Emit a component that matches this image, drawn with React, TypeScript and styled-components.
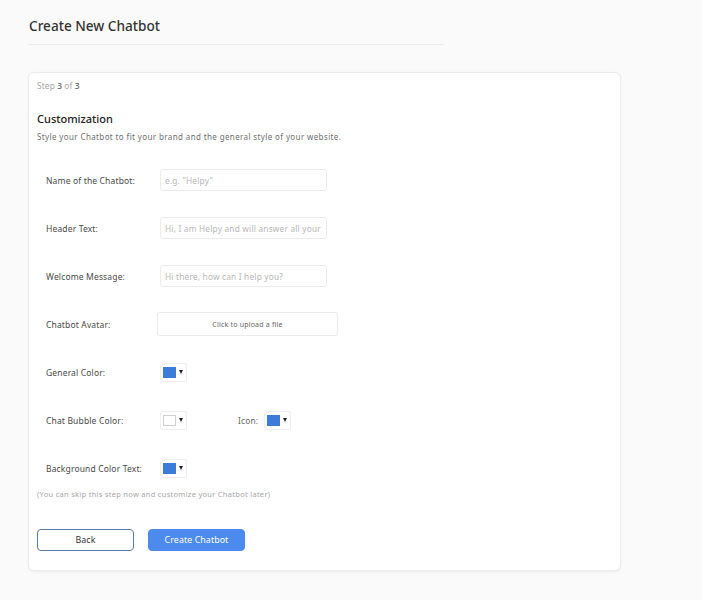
import React from "react";
import styled, { createGlobalStyle } from "styled-components";

const GlobalStyle = createGlobalStyle`
	html, body {
		margin: 0;
		padding: 0;
		background: #fafafa;
		font-family: "Noto Sans", "Open Sans", sans-serif;
		color: #333;
	}
`;

const Page = styled.div`
	padding: 0 81px 28px 28px;
`;

const Header = styled.div`
	width: 415px;
	padding: 16px 0 8px 1px;
	border-bottom: 1px solid #ececec;
`;

const Title = styled.h1`
	margin: 0;
	font-size: 13.6px;
	line-height: 20px;
	font-weight: 500;
	color: #333;
`;

const Card = styled.div`
	margin-top: 27px;
	width: 593px;
	box-sizing: border-box;
	background: #fff;
	border: 1px solid #ececec;
	border-radius: 6px;
	box-shadow: 0 1px 3px rgba(0, 0, 0, 0.06);
	padding: 7px 9px 19px 8px;
`;

const Step = styled.div`
	font-size: 8.4px;
	line-height: 12px;
	color: #a8a8a8;
	letter-spacing: 0.1px;

	& b {
		color: #777;
		font-weight: 600;
	}
`;

const SectionTitle = styled.h2`
	margin: 19px 0 0;
	font-size: 11px;
	line-height: 16px;
	font-weight: 500;
	color: #222;
`;

const SectionText = styled.p`
	margin: 4px 0 0;
	font-size: 8px;
	line-height: 12px;
	letter-spacing: 0.38px;
	color: #707070;
`;

const Form = styled.div`
	display: flex;
	flex-direction: column;
	gap: 24px;
	margin-top: 25px;
	padding-left: 9px;
`;

const Row = styled.div`
	display: flex;
	align-items: center;
	height: 24px;
`;

const Label = styled.label<{ $width?: number }>`
	width: ${(p) => p.$width ?? 114}px;
	flex: none;
	font-size: 8.5px;
	letter-spacing: 0.15px;
	color: #4a4a4a;
`;

const TextInput = styled.input`
	width: 167px;
	height: 22px;
	box-sizing: border-box;
	border: 1px solid #ececec;
	border-radius: 3px;
	padding: 0 4px;
	font-family: inherit;
	font-size: 8.3px;
	letter-spacing: 0.2px;
	color: #333;
	background: #fff;
	outline: none;

	&::placeholder {
		color: #b8b8b8;
	}
`;

const Upload = styled.div`
	width: 181px;
	height: 24px;
	margin-left: -3px;
	box-sizing: border-box;
	border: 1px solid #ececec;
	border-radius: 3px;
	display: flex;
	align-items: center;
	justify-content: center;
	font-size: 7px;
	letter-spacing: 0.2px;
	color: #666;
	cursor: pointer;
`;

const Picker = styled.div`
	width: 27px;
	height: 19px;
	box-sizing: border-box;
	border: 1px solid #eeeeee;
	border-radius: 2px;
	display: flex;
	align-items: center;
	gap: 3px;
	padding-left: 2px;
	background: #fff;
`;

const Swatch = styled.span<{ $color: string }>`
	width: 13px;
	height: 11px;
	box-sizing: border-box;
	background: ${(p) => p.$color};
	border: ${(p) => (p.$color === "#ffffff" ? "1px solid #cfcfcf" : "none")};
`;

const Caret = styled.span`
	width: 0;
	height: 0;
	border-left: 2px solid transparent;
	border-right: 2px solid transparent;
	border-top: 4px solid #222;
`;

const IconGroup = styled.div`
	display: flex;
	align-items: center;
	margin-left: 51px;
	gap: 6px;
`;

const IconLabel = styled.span`
	font-size: 8.4px;
	letter-spacing: 0.15px;
	color: #666;
`;

const Note = styled.p`
	margin: 8px 0 0;
	font-size: 7.5px;
	line-height: 12px;
	letter-spacing: 0.28px;
	color: #a8a8a8;
`;

const Actions = styled.div`
	display: flex;
	gap: 14px;
	margin-top: 29px;
`;

const Button = styled.button<{ $primary?: boolean }>`
	width: 97px;
	height: 22px;
	box-sizing: border-box;
	border-radius: 4px;
	font-family: inherit;
	font-size: 8.8px;
	letter-spacing: 0.1px;
	cursor: pointer;
	border: 1px solid ${(p) => (p.$primary ? "#4d8af0" : "#5b7aa5")};
	background: ${(p) => (p.$primary ? "#4d8af0" : "#fff")};
	color: ${(p) => (p.$primary ? "#fff" : "#333")};
`;

function ColorPicker({ color }: { color: string }) {
	return (
		<Picker>
			<Swatch $color={color} />
			<Caret />
		</Picker>
	);
}

export default function App() {
	return (
		<>
			<GlobalStyle />
			<Page>
				<Header>
					<Title>Create New Chatbot</Title>
				</Header>
				<Card>
					<Step>
						Step <b>3</b> of <b>3</b>
					</Step>
					<SectionTitle>Customization</SectionTitle>
					<SectionText>
						Style your Chatbot to fit your brand and the general style of your website.
					</SectionText>
					<Form>
						<Row>
							<Label>Name of the Chatbot:</Label>
							<TextInput placeholder='e.g. "Helpy"' />
						</Row>
						<Row>
							<Label>Header Text:</Label>
							<TextInput placeholder="Hi, I am Helpy and will answer all your questions" />
						</Row>
						<Row>
							<Label>Welcome Message:</Label>
							<TextInput placeholder="Hi there, how can I help you?" />
						</Row>
						<Row>
							<Label>Chatbot Avatar:</Label>
							<Upload>Click to upload a file</Upload>
						</Row>
						<Row>
							<Label>General Color:</Label>
							<ColorPicker color="#3d7bd9" />
						</Row>
						<Row>
							<Label>Chat Bubble Color:</Label>
							<ColorPicker color="#ffffff" />
							<IconGroup>
								<IconLabel>Icon:</IconLabel>
								<ColorPicker color="#3d7bd9" />
							</IconGroup>
						</Row>
						<Row>
							<Label>Background Color Text:</Label>
							<ColorPicker color="#3d7bd9" />
						</Row>
					</Form>
					<Note>(You can skip this step now and customize your Chatbot later)</Note>
					<Actions>
						<Button>Back</Button>
						<Button $primary>Create Chatbot</Button>
					</Actions>
				</Card>
			</Page>
		</>
	);
}
